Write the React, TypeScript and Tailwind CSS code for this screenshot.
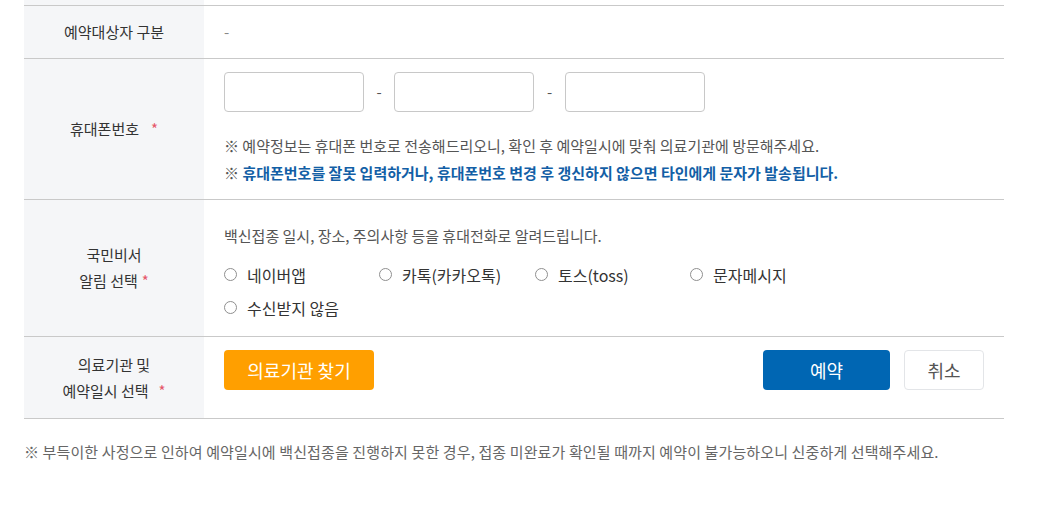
import React from "react";

const font = { fontFamily: '"Noto Sans CJK KR", "Noto Sans", sans-serif' };

function Label({ children }: { children: React.ReactNode }) {
  return (
    <div className="w-[180px] shrink-0 bg-[#f5f6f8] flex flex-col items-center justify-center text-[15px] text-[#333] leading-[26px] text-center">
      {children}
    </div>
  );
}

function Star({ ml }: { ml: string }) {
  return <span className={`text-[#e5566a] ${ml}`}>*</span>;
}

function Radio({ label, w }: { label: string; w: string }) {
  return (
    <label className={`flex items-center h-[33px] ${w}`}>
      <span className="w-[13px] h-[13px] rounded-full border border-[#8f8f8f] bg-white shrink-0" />
      <span className="ml-[10px] text-[16px] text-[#333]">{label}</span>
    </label>
  );
}

export default function App() {
  return (
    <div className="w-[1042px] h-[508px] bg-white" style={font}>
      <div className="ml-[24px] w-[980px]">
        <div className="flex h-[5px]">
          <div className="w-[180px] bg-[#f5f6f8]" />
        </div>
        {/* Row 1 */}
        <div className="flex h-[53px] border-t border-[#c9c9c9]">
          <Label>예약대상자 구분</Label>
          <div className="flex items-center px-5 text-[15px] text-[#888]">-</div>
        </div>
        {/* Row 2 */}
        <div className="flex border-t border-[#c9c9c9]">
          <Label>
            <div>
              휴대폰번호<Star ml="ml-[12px]" />
            </div>
          </Label>
          <div className="px-5 pt-[13px] pb-[13px]">
            <div className="flex items-center">
              <div className="w-[140px] h-[40px] border border-[#c8c8c8] rounded-[4px] bg-white" />
              <span className="w-[30px] text-center text-[15px] text-[#555]">-</span>
              <div className="w-[140px] h-[40px] border border-[#c8c8c8] rounded-[4px] bg-white" />
              <span className="w-[31px] text-center text-[15px] text-[#555]">-</span>
              <div className="w-[140px] h-[40px] border border-[#c8c8c8] rounded-[4px] bg-white" />
            </div>
            <div className="mt-[20px] text-[15px] leading-[27px]">
              <p className="text-[#555]">
                ※ 예약정보는 휴대폰 번호로 전송해드리오니, 확인 후 예약일시에 맞춰 의료기관에 방문해주세요.
              </p>
              <p className="text-[#555]">
                ※{" "}
                <span className="font-bold text-[#135fa6]">
                  휴대폰번호를 잘못 입력하거나, 휴대폰번호 변경 후 갱신하지 않으면 타인에게 문자가 발송됩니다.
                </span>
              </p>
            </div>
          </div>
        </div>
        {/* Row 3 */}
        <div className="flex border-t border-[#c9c9c9]">
          <Label>
            <div>국민비서</div>
            <div>
              알림 선택<Star ml="ml-[4px]" />
            </div>
          </Label>
          <div className="px-5 pt-[24px] pb-[12px]">
            <p className="text-[15px] leading-6 text-[#555]">
              백신접종 일시, 장소, 주의사항 등을 휴대전화로 알려드립니다.
            </p>
            <div className="mt-[10px] flex flex-wrap w-[640px]">
              <Radio label="네이버앱" w="w-[155px]" />
              <Radio label="카톡(카카오톡)" w="w-[156px]" />
              <Radio label="토스(toss)" w="w-[155px]" />
              <Radio label="문자메시지" w="w-[155px]" />
              <Radio label="수신받지 않음" w="w-[155px]" />
            </div>
          </div>
        </div>
        {/* Row 4 */}
        <div className="flex h-[83px] border-t border-b border-[#c9c9c9]">
          <Label>
            <div>의료기관 및</div>
            <div>
              예약일시 선택<Star ml="ml-[10px]" />
            </div>
          </Label>
          <div className="flex-1 flex items-start justify-between pl-5 pr-[20px] pt-[13px]">
            <button className="w-[150px] h-[40px] rounded-[4px] bg-[#ff9f00] text-white text-[18px]">
              의료기관 찾기
            </button>
            <div className="flex gap-[14px]">
              <button className="w-[127px] h-[40px] rounded-[4px] bg-[#0066b3] text-white text-[18px]">
                예약
              </button>
              <button className="w-[80px] h-[40px] rounded-[4px] bg-white border border-[#e3e5e8] text-[#555] text-[18px]">
                취소
              </button>
            </div>
          </div>
        </div>
        <p className="mt-[21px] text-[15px] leading-6 text-[#666] tracking-[0.12px]">
          ※ 부득이한 사정으로 인하여 예약일시에 백신접종을 진행하지 못한 경우, 접종 미완료가 확인될 때까지 예약이 불가능하오니 신중하게 선택해주세요.
        </p>
      </div>
    </div>
  );
}
